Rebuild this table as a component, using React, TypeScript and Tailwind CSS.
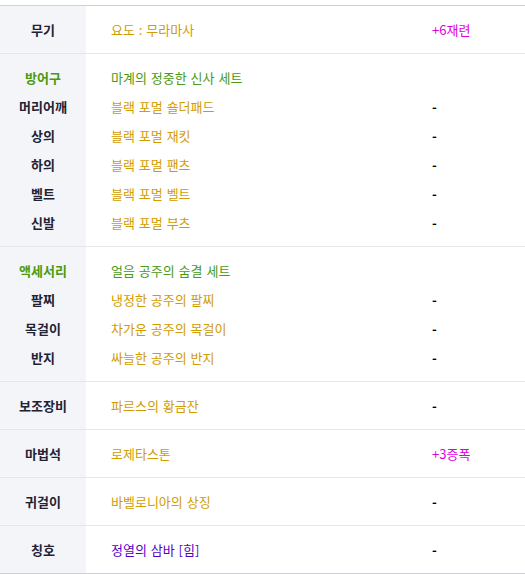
type Line = {
  label: string
  labelColor?: 'dark' | 'green'
  name: string
  nameColor: 'gold' | 'green' | 'purple'
  extra?: string
}

const groups: Line[][] = [
  [{ label: '무기', name: '요도 : 무라마사', nameColor: 'gold', extra: '+6재련' }],
  [
    { label: '방어구', labelColor: 'green', name: '마계의 정중한 신사 세트', nameColor: 'green' },
    { label: '머리어깨', name: '블랙 포멀 숄더패드', nameColor: 'gold', extra: '-' },
    { label: '상의', name: '블랙 포멀 재킷', nameColor: 'gold', extra: '-' },
    { label: '하의', name: '블랙 포멀 팬츠', nameColor: 'gold', extra: '-' },
    { label: '벨트', name: '블랙 포멀 벨트', nameColor: 'gold', extra: '-' },
    { label: '신발', name: '블랙 포멀 부츠', nameColor: 'gold', extra: '-' },
  ],
  [
    { label: '액세서리', labelColor: 'green', name: '얼음 공주의 숨결 세트', nameColor: 'green' },
    { label: '팔찌', name: '냉정한 공주의 팔찌', nameColor: 'gold', extra: '-' },
    { label: '목걸이', name: '차가운 공주의 목걸이', nameColor: 'gold', extra: '-' },
    { label: '반지', name: '싸늘한 공주의 반지', nameColor: 'gold', extra: '-' },
  ],
  [{ label: '보조장비', name: '파르스의 황금잔', nameColor: 'gold', extra: '-' }],
  [{ label: '마법석', name: '로제타스톤', nameColor: 'gold', extra: '+3증폭' }],
  [{ label: '귀걸이', name: '바벨로니아의 상징', nameColor: 'gold', extra: '-' }],
  [{ label: '칭호', name: '정열의 삼바 [힘]', nameColor: 'purple', extra: '-' }],
]

const nameColors = {
  gold: 'text-[#d19c00]',
  green: 'text-[#4a9a12]',
  purple: 'text-[#5500c8]',
}

export default function App() {
  return (
    <div className="bg-white w-[525px] h-[574px] pt-[5px] font-['Noto_Sans_CJK_KR','Noto_Sans',sans-serif] text-[13px]">
      <div className="border-t border-b border-[#d0d0d6]">
        {groups.map((group, gi) => (
          <div
            key={gi}
            className={`flex ${gi < groups.length - 1 ? 'border-b border-[#e6e6ea]' : ''}`}
          >
            {/* label column */}
            <div className="w-[86px] shrink-0 bg-[#f4f5f9] py-[9px]">
              {group.map((item) => (
                <div
                  key={item.label}
                  className={`h-[29px] flex items-center justify-center font-bold ${
                    item.labelColor === 'green' ? 'text-[#4a9a12]' : 'text-[#222233]'
                  }`}
                >
                  {item.label}
                </div>
              ))}
            </div>

            {/* item column */}
            <div className="flex-1 py-[9px]">
              {group.map((item) => (
                <div key={item.name} className="h-[29px] flex items-center">
                  <div className={`w-[346px] pl-[25px] [word-spacing:1px] ${nameColors[item.nameColor]}`}>
                    {item.name}
                  </div>
                  {item.extra === '-' ? (
                    <span className="text-black font-bold">-</span>
                  ) : item.extra ? (
                    <span className="text-[#dd00dd]">{item.extra}</span>
                  ) : null}
                </div>
              ))}
            </div>
          </div>
        ))}
      </div>
    </div>
  )
}
